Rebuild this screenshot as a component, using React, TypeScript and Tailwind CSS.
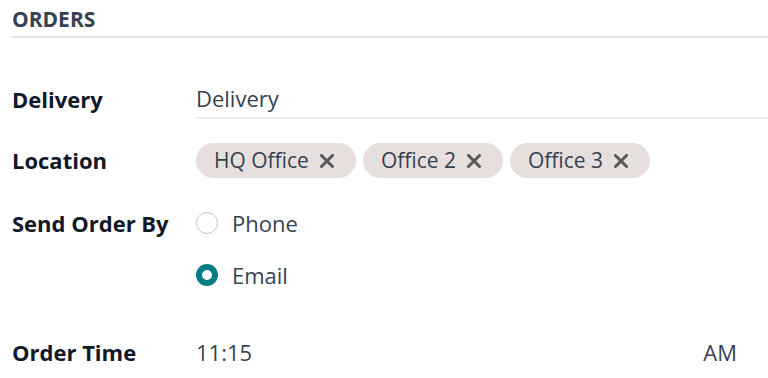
import React from "react";

const tags = ["HQ Office", "Office 2", "Office 3"];

function XIcon() {
  return (
    <svg width="14" height="14" viewBox="0 0 14 14" className="shrink-0">
      <path
        d="M1.5 1.5 L12.5 12.5 M12.5 1.5 L1.5 12.5"
        stroke="#585858"
        strokeWidth="3"
        strokeLinecap="round"
      />
    </svg>
  );
}

function Radio({ checked }: { checked?: boolean }) {
  return checked ? (
    <span className="block h-[22px] w-[22px] shrink-0 rounded-full border-[6px] border-[#017e84] bg-white" />
  ) : (
    <span className="block h-[22px] w-[22px] shrink-0 rounded-full border border-[#c4c4c4] bg-white" />
  );
}

function Label({ children }: { children: React.ReactNode }) {
  return (
    <div className="w-[184px] shrink-0 text-[22px] font-bold text-[#111827]">
      {children}
    </div>
  );
}

export default function App() {
  return (
    <main
      className="h-[378px] w-[768px] overflow-hidden bg-white pl-[12px]"
      style={{ fontFamily: '"Open Sans", "Noto Sans", sans-serif' }}
    >
      <div className="flex h-[38px] items-center border-b-2 border-[#e6e6e6] pt-[4px] text-[21px] font-bold text-[#374151]">
        ORDERS
      </div>

      <div className="mt-[41px] flex h-[40px] items-center">
        <Label>Delivery</Label>
        <div className="flex h-full flex-1 items-center border-b-2 border-[#ececf2] text-[22px] text-[#374151]">
          Delivery
        </div>
      </div>

      <div className="mt-[24px] flex h-[35px] items-center">
        <Label>Location</Label>
        <div className="flex gap-[7px]">
          {tags.map((t) => (
            <span
              key={t}
              className="flex h-[35px] items-center gap-[11px] rounded-full bg-[#e6dfde] pl-[18px] pr-[22px] text-[21px] text-[#374151]"
            >
              {t}
              <XIcon />
            </span>
          ))}
        </div>
      </div>

      <div className="mt-[29px] flex h-[32px] items-center">
        <Label>Send Order By</Label>
        <div className="flex items-center gap-[14px] text-[22px] text-[#374151]">
          <Radio />
          Phone
        </div>
      </div>

      <div className="mt-[20px] flex h-[32px] items-center">
        <div className="w-[184px] shrink-0" />
        <div className="flex items-center gap-[14px] text-[22px] text-[#374151]">
          <Radio checked />
          Email
        </div>
      </div>

      <div className="mt-[45px] flex h-[32px] items-center">
        <Label>Order Time</Label>
        <div className="flex flex-1 items-center justify-between pr-[31px] text-[22px] text-[#374151]">
          <span>11:15</span>
          <span>AM</span>
        </div>
      </div>
    </main>
  );
}
